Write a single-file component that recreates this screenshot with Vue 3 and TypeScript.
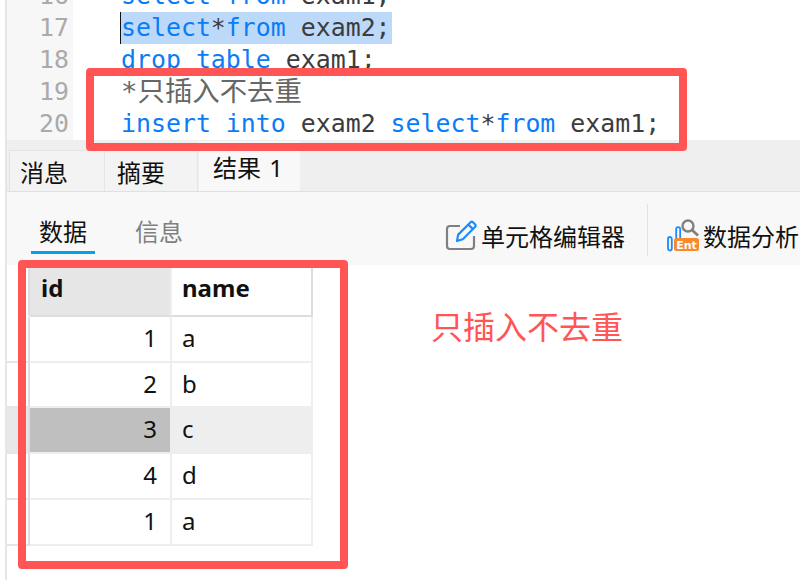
<template>
  <div class="screen">
    <div class="main">
      <!-- sql editor -->
      <div class="editor">
        <div class="editor-lines">
          <div v-for="line in codeLines" :key="line.no" class="code-line">
            <div class="line-no">{{ line.no }}</div>
            <div class="line-code" :class="{ current: line.selected }">
              <span :class="{ selection: line.selected }">
                <span v-for="(t, i) in line.tokens" :key="i" :class="t.kind">{{ t.text }}</span>
              </span>
            </div>
          </div>
        </div>
      </div>

      <!-- result tabs -->
      <div class="tabbar">
        <div v-for="tab in tabs" :key="tab.label" class="tab" :class="{ active: tab.active }">{{ tab.label }}</div>
      </div>

      <!-- sub tabs and tools -->
      <div class="toolbar">
        <div class="subtab on">数据</div>
        <div class="subtab">信息</div>
        <div class="tools">
          <div class="tool">
            <svg width="32" height="32" viewBox="0 0 32 32" fill="none">
              <path d="M15 7H5a3 3 0 0 0-3 3v17a3 3 0 0 0 3 3h21a3 3 0 0 0 3-3V17" stroke="#808080" stroke-width="2.2" />
              <path d="M12 22l1.2-6.4L25.6 3.2a1.6 1.6 0 0 1 2.3 0l2.3 2.3a1.6 1.6 0 0 1 0 2.3L17.8 20.2z" stroke="#1a8cff" stroke-width="2.2" stroke-linejoin="round" />
              <path d="M23.4 5.6l4.4 4.4" stroke="#1a8cff" stroke-width="2.2" />
            </svg>
            <span>单元格编辑器</span>
          </div>
          <div class="tool-sep"></div>
          <div class="tool analysis">
            <svg width="34" height="34" viewBox="0 0 34 34" fill="none">
              <circle cx="21" cy="8" r="5.5" stroke="#808080" stroke-width="2.4" />
              <path d="M25 12l6 5.5" stroke="#808080" stroke-width="2.8" />
              <rect x="9.2" y="9.2" width="4" height="14" rx="2" stroke="#1a8cff" stroke-width="1.8" />
              <rect x="1" y="19" width="3.8" height="13.5" rx="1.9" stroke="#1a8cff" stroke-width="1.8" />
              <rect x="7" y="20" width="25" height="13" rx="2.5" fill="#f98a2c" />
              <text x="19.5" y="31" text-anchor="middle" class="ent">Ent</text>
            </svg>
            <span>数据分析</span>
          </div>
        </div>
      </div>

      <!-- data grid -->
      <div class="grid">
        <div class="grid-row head">
          <div class="gutter"></div>
          <div class="cell id">id</div>
          <div class="cell">name</div>
        </div>
        <div v-for="(row, i) in rows" :key="i" class="grid-row" :class="{ picked: row.picked }">
          <div class="gutter"></div>
          <div class="cell id num">{{ row.id }}</div>
          <div class="cell">{{ row.name }}</div>
        </div>
      </div>
    </div>

    <!-- red annotations drawn over the screenshot -->
    <div class="mark mark-code"></div>
    <div class="mark mark-grid"></div>
    <div class="note">只插入不去重</div>
  </div>
</template>

<script setup lang="ts">
interface Token {
  text: string
  kind: 'kw' | 'txt' | 'cmt'
}

interface CodeLine {
  no: number
  tokens: Token[]
  selected?: boolean
}

const kw = (text: string): Token => ({ text, kind: 'kw' })
const txt = (text: string): Token => ({ text, kind: 'txt' })
const cmt = (text: string): Token => ({ text, kind: 'cmt' })

const codeLines: CodeLine[] = [
  { no: 16, tokens: [kw('select'), txt(' '), kw('from'), txt(' exam1;')] },
  { no: 17, tokens: [kw('select'), txt('*'), kw('from'), txt(' exam2;')], selected: true },
  { no: 18, tokens: [kw('drop'), txt(' '), kw('table'), txt(' exam1;')] },
  { no: 19, tokens: [cmt('*只插入不去重')] },
  { no: 20, tokens: [kw('insert'), txt(' '), kw('into'), txt(' exam2 '), kw('select'), txt('*'), kw('from'), txt(' exam1;')] }
]

const tabs = [{ label: '消息' }, { label: '摘要' }, { label: '结果 1', active: true }]

const rows = [
  { id: 1, name: 'a' },
  { id: 2, name: 'b' },
  { id: 3, name: 'c', picked: true },
  { id: 4, name: 'd' },
  { id: 1, name: 'a' }
]
</script>

<style>
html,
body {
  margin: 0;
  background: #fff;
}
</style>

<style scoped>
.screen {
  position: relative;
  width: 800px;
  height: 580px;
  overflow: hidden;
  background: #fff;
  font-family: "Noto Sans", "Noto Sans CJK SC", sans-serif;
  color: #111;
}

.main {
  margin-left: 5px;
  height: 580px;
  border-left: 2px solid #e6e6e6;
  display: flex;
  flex-direction: column;
}

.editor {
  height: 140px;
  flex: none;
  overflow: hidden;
}

.editor-lines {
  margin-top: -20px;
}

.code-line {
  display: flex;
  height: 32px;
  line-height: 32px;
  font-family: "DejaVu Sans Mono", "Noto Sans CJK SC", monospace;
  font-size: 24.88px;
  white-space: pre;
}

.line-no {
  width: 62px;
  padding-right: 4px;
  text-align: right;
  background: #f7f7f7;
  color: #aaa;
}

.line-code {
  flex: 1;
  padding-left: 48px;
}

.line-code.current {
  padding-left: 47px;
}

.selection {
  display: inline-block;
  height: 32px;
  padding-right: 1px;
  background: #bcd9f9;
  border-left: 1px solid #111;
}

.kw {
  color: #0a7cf5;
}

.txt {
  color: #3c3c3c;
}

.cmt {
  color: #666;
  font-size: 27.4px;
}

.tabbar {
  height: 52px;
  flex: none;
  box-sizing: border-box;
  display: flex;
  align-items: flex-end;
  padding-left: 2px;
  background: #efefef;
  border-bottom: 1px solid #e0e0e0;
}

.tab {
  box-sizing: border-box;
  height: 41px;
  width: 96px;
  padding-left: 10px;
  border: 1px solid #e4e4e4;
  border-bottom: none;
  margin-right: -1px;
  background: #f3f3f3;
  font-size: 24px;
  line-height: 44px;
  word-spacing: 2px;
}

.tab:nth-child(2) {
  width: 94px;
  padding-left: 12px;
}

.tab.active {
  width: 103px;
  height: 51px;
  padding-left: 14px;
  margin-left: 1px;
  background: #f8f8f8;
  border-color: #efefef;
  line-height: 54px;
}

.toolbar {
  height: 73px;
  flex: none;
  box-sizing: border-box;
  display: flex;
  align-items: flex-start;
  padding-left: 24px;
  background: #f8f8f8;
}

.subtab {
  box-sizing: border-box;
  width: 64px;
  height: 62px;
  margin-right: 32px;
  padding-top: 21px;
  text-align: center;
  font-size: 24px;
  line-height: 38px;
  color: #808080;
}

.subtab.on {
  color: #111;
  border-bottom: 3px solid #00a2e8;
}

.subtab + .subtab {
  margin-left: 0;
}

.tools {
  margin-left: auto;
  display: flex;
  align-items: center;
  height: 52px;
  margin-top: 12px;
  white-space: nowrap;
}

.tool {
  display: flex;
  align-items: center;
  gap: 4px;
  padding-top: 10px;
  font-size: 24px;
}

.tool svg {
  flex: none;
}

.tool-sep {
  width: 1px;
  height: 52px;
  margin: 0 19px 0 22px;
  background: #e2e2e2;
}

.analysis {
  gap: 2px;
  margin-right: 1px;
}

.ent {
  font-family: "DejaVu Sans", sans-serif;
  font-size: 11px;
  font-weight: 700;
  fill: #fff;
}

.grid {
  flex: 1;
  background: #fff;
}

.grid-row {
  display: grid;
  grid-template-columns: 23px 142px 141px;
  height: 46px;
  font-size: 24px;
  line-height: 42px;
}

.gutter {
  box-sizing: border-box;
  border-bottom: 2px solid #e6e6e6;
  border-right: 2px solid #ddd;
}

.cell {
  box-sizing: border-box;
  padding-left: 10px;
  border-bottom: 2px solid #eee;
  border-right: 2px solid #eee;
}

.num {
  padding: 0 13px 0 0;
  text-align: right;
}

.head {
  height: 52px;
  line-height: 46px;
  font-weight: 700;
}

.head .gutter {
  border-bottom-color: #fff;
}

.head .cell {
  border-bottom: 2px solid #ddd;
  border-right-color: #ddd;
}

.head .id {
  padding-left: 11px;
  background: #e6e6e6;
  border-right-color: #eee;
}

.grid-row:nth-child(3) {
  height: 45px;
}

.picked .gutter {
  background: #e8e8e8;
}

.picked .cell {
  background: #eee;
}

.picked .id {
  background: #bfbfbf;
}

.mark {
  position: absolute;
  box-sizing: border-box;
  border: 8px solid #ff5555;
  border-radius: 4px;
}

.mark-code {
  left: 86px;
  top: 68px;
  width: 601px;
  height: 83px;
}

.mark-grid {
  left: 18px;
  top: 260px;
  width: 330px;
  height: 309px;
}

.note {
  position: absolute;
  left: 431px;
  top: 304px;
  font-size: 32px;
  line-height: 46px;
  color: #ff5555;
}
</style>
